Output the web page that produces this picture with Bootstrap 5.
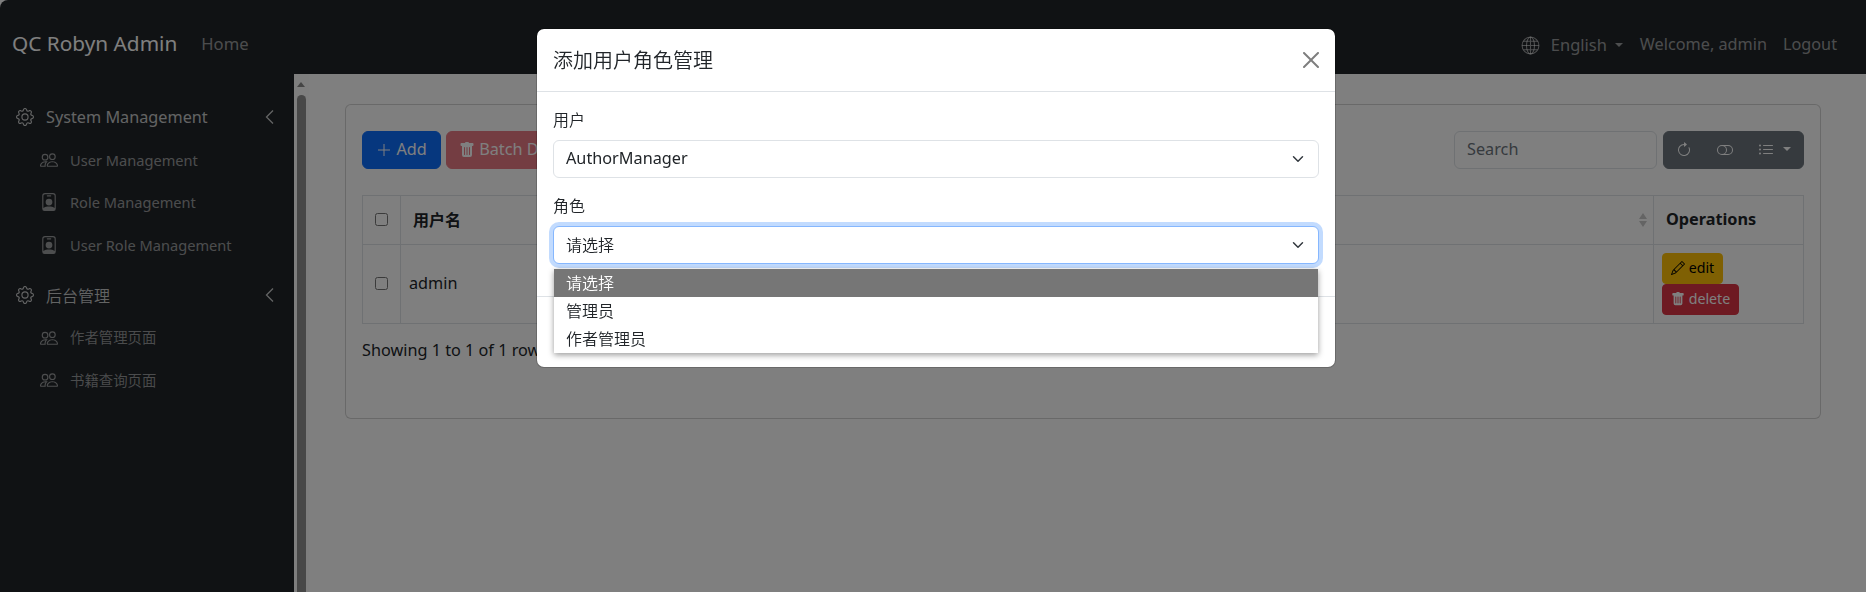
<!DOCTYPE html>
<html lang="en">
<head>
<meta charset="utf-8">
<title>QC Robyn Admin</title>
<link href="https://cdn.jsdelivr.net/npm/bootstrap@5.3.0/dist/css/bootstrap.min.css" rel="stylesheet">
<style>
body{font-family:"Noto Sans","Noto Sans CJK SC",sans-serif;background:#fff;height:592px;overflow:hidden}
.en{font-size:1.015em;line-height:1;vertical-align:.04em}
[lang=zh]{font-family:"Noto Sans CJK SC",sans-serif;font-weight:350}
svg.ic{width:1em;height:1em;fill:currentColor;flex:none;vertical-align:-.125em}
svg.ln{fill:none;stroke:currentColor}
.shell{height:592px;border-top-left-radius:8px;overflow:hidden}
.topbar{height:74px;background:#212529;padding:16px 29px 0 12px;color:rgba(255,255,255,.55)}
.brand-text{font-size:20px;color:#fff}
.brand-text .en,.home-link .en{font-size:1.04em}
.home-link{margin-left:24px}
.globe{font-size:19px}
.lang-pick{margin-left:11px;margin-right:17px;padding-top:1px}
.lang-pick .en{font-size:1.03em}
.lang-pick::after{margin-left:.5em}
.logout{margin-left:16px}
.side{width:294px;background:#212529;color:rgba(255,255,255,.55);padding-top:15px;flex:none}
.side-head{height:50px;padding:6px 16px 0 16px;color:rgba(255,255,255,.75)}
.side-head svg{font-size:18px}
.side-head svg.chev{font-size:16px;stroke-width:1.3}
.head-text{margin-left:12px}
.side-item{height:42.67px;padding-left:40px;padding-bottom:1px;font-size:14.4px}
.side-item svg{font-size:18px;margin-right:12px}
.side-item [lang=zh]{margin-top:-1px}
.rail{width:15px;flex:none;padding:8px 3px 0;background:#fcfcfc}
.rail-up{width:0;border:4.5px solid transparent;border-top:0;border-bottom:5px solid #8b8b8b}
.rail-thumb{width:9px;background:#909090;border-radius:5px 5px 0 0;margin-top:8px}
.panel{margin:30px 45px 0 36px;height:315px;padding:25.5px 16px 0}
.tools{gap:5px}
.right-tools{gap:6px}
.add-btn{width:79px}
.searchbox{width:203px}
.btn-group .dropdown-toggle::after{margin-left:.3em}
.tbl{margin:26px 0 0}
.tbl th,.tbl td{vertical-align:middle}
.tbl th{padding:12px;height:49px}
.tbl th [lang=zh]{margin-top:-2px}
.tbl th .sorter{margin-right:-6px}
.tbl .pick{width:38px;padding:0 0 1px;text-align:center}
.tbl .ops{width:150px}
.tbl input{width:13px;height:13px;display:block;margin:auto}
.info{margin-top:15px}
.modal-pad{padding-left:6px}
.modal-body .form-label{margin-top:-1px;margin-bottom:9px}
.modal-body .form-select{height:38px}
.modal-body .form-select[lang=zh]{padding-top:5px}
.picker{position:absolute;left:1px;right:1px;top:43px;background:#fff;box-shadow:0 2px 6px rgba(0,0,0,.4);z-index:3}
.picker div{height:28px;line-height:26px;padding-left:12px}
.picker .on{background:#767676;color:#fff}
.focused{border-color:#86b7fe;box-shadow:0 0 0 .25rem rgba(13,110,253,.25)}
.foot-space{height:71px}
</style>
</head>
<body>
<svg class="d-none">
<symbol id="gear" viewBox="0 0 16 16"><path d="M8 4.754a3.246 3.246 0 1 0 0 6.492 3.246 3.246 0 0 0 0-6.492zM5.754 8a2.246 2.246 0 1 1 4.492 0 2.246 2.246 0 0 1-4.492 0z"/><path d="M9.796 1.343c-.527-1.79-3.065-1.79-3.592 0l-.094.319a.873.873 0 0 1-1.255.52l-.292-.16c-1.64-.892-3.433.902-2.54 2.541l.159.292a.873.873 0 0 1-.52 1.255l-.319.094c-1.79.527-1.79 3.065 0 3.592l.319.094a.873.873 0 0 1 .52 1.255l-.16.292c-.892 1.64.901 3.434 2.541 2.54l.292-.159a.873.873 0 0 1 1.255.52l.094.319c.527 1.79 3.065 1.79 3.592 0l.094-.319a.873.873 0 0 1 1.255-.52l.292.16c1.64.893 3.434-.902 2.54-2.541l-.159-.292a.873.873 0 0 1 .52-1.255l.319-.094c1.79-.527 1.79-3.065 0-3.592l-.319-.094a.873.873 0 0 1-.52-1.255l.16-.292c.893-1.64-.902-3.433-2.541-2.54l-.292.159a.873.873 0 0 1-1.255-.52l-.094-.319zm-2.633.283c.246-.835 1.428-.835 1.674 0l.094.319a1.873 1.873 0 0 0 2.693 1.115l.291-.16c.764-.415 1.6.42 1.184 1.185l-.159.292a1.873 1.873 0 0 0 1.116 2.692l.318.094c.835.246.835 1.428 0 1.674l-.319.094a1.873 1.873 0 0 0-1.115 2.693l.16.291c.415.764-.42 1.6-1.185 1.184l-.291-.159a1.873 1.873 0 0 0-2.693 1.116l-.094.318c-.246.835-1.428.835-1.674 0l-.094-.319a1.873 1.873 0 0 0-2.692-1.115l-.292.16c-.764.415-1.6-.42-1.184-1.185l.159-.291A1.873 1.873 0 0 0 1.945 8.93l-.319-.094c-.835-.246-.835-1.428 0-1.674l.319-.094A1.873 1.873 0 0 0 3.06 4.377l-.16-.292c-.415-.764.42-1.6 1.185-1.184l.292.159a1.873 1.873 0 0 0 2.692-1.115l.094-.319z"/></symbol>
<symbol id="people" viewBox="0 0 16 16"><path d="M15 14s1 0 1-1-1-4-5-4-5 3-5 4 1 1 1 1h8Zm-7.978-1A.261.261 0 0 1 7 12.996c.001-.264.167-1.03.76-1.72C8.312 10.629 9.282 10 11 10c1.717 0 2.687.63 3.24 1.276.593.69.758 1.457.76 1.72l-.008.002a.274.274 0 0 1-.014.002H7.022ZM11 7a2 2 0 1 0 0-4 2 2 0 0 0 0 4Zm3-2a3 3 0 1 1-6 0 3 3 0 0 1 6 0ZM6.936 9.28a5.88 5.88 0 0 0-1.23-.247A7.35 7.35 0 0 0 5 9c-4 0-5 3-5 4 0 .667.333 1 1 1h4.216A2.238 2.238 0 0 1 5 13c0-1.01.377-2.042 1.09-2.904.243-.294.526-.569.846-.816ZM4.92 10A5.493 5.493 0 0 0 4 13H1c0-.26.164-1.03.76-1.724.545-.636 1.492-1.256 3.16-1.275ZM1.5 5.5a3 3 0 1 1 6 0 3 3 0 0 1-6 0Zm3-2a2 2 0 1 0 0 4 2 2 0 0 0 0-4Z"/></symbol>
<symbol id="badge-i" viewBox="0 0 16 16"><path d="M6.5 2a.5.5 0 0 0 0 1h3a.5.5 0 0 0 0-1h-3zM11 8a3 3 0 1 1-6 0 3 3 0 0 1 6 0z"/><path d="M4.5 0A2.5 2.5 0 0 0 2 2.5V14a2 2 0 0 0 2 2h8a2 2 0 0 0 2-2V2.5A2.5 2.5 0 0 0 11.5 0h-7zM3 2.5A1.5 1.5 0 0 1 4.5 1h7A1.5 1.5 0 0 1 13 2.5v10.795a4.2 4.2 0 0 0-.776-.492C11.392 12.387 10.063 12 8 12s-3.392.387-4.224.803a4.2 4.2 0 0 0-.776.492V2.5z"/></symbol>
<symbol id="trash" viewBox="0 0 16 16"><path d="M2.5 1a1 1 0 0 0-1 1v1a1 1 0 0 0 1 1H3v9a2 2 0 0 0 2 2h6a2 2 0 0 0 2-2V4h.5a1 1 0 0 0 1-1V2a1 1 0 0 0-1-1H10a1 1 0 0 0-1-1H7a1 1 0 0 0-1 1H2.5zm3 4a.5.5 0 0 1 .5.5v7a.5.5 0 0 1-1 0v-7a.5.5 0 0 1 .5-.5zM8 5a.5.5 0 0 1 .5.5v7a.5.5 0 0 1-1 0v-7A.5.5 0 0 1 8 5zm3 .5v7a.5.5 0 0 1-1 0v-7a.5.5 0 0 1 1 0z"/></symbol>
<symbol id="pencil" viewBox="0 0 16 16"><path d="M12.146.146a.5.5 0 0 1 .708 0l3 3a.5.5 0 0 1 0 .708l-10 10a.5.5 0 0 1-.168.11l-5 2a.5.5 0 0 1-.65-.65l2-5a.5.5 0 0 1 .11-.168l10-10zM11.207 2.5 13.5 4.793 14.793 3.5 12.5 1.207 11.207 2.5zm1.586 3L10.5 3.207 4 9.707V10h.5a.5.5 0 0 1 .5.5v.5h.5a.5.5 0 0 1 .5.5v.5h.293l6.5-6.5zm-9.761 5.175-.106.106-1.528 3.821 3.821-1.528.106-.106A.5.5 0 0 1 5 12.5V12h-.5a.5.5 0 0 1-.5-.5V11h-.5a.5.5 0 0 1-.468-.325z"/></symbol>
</svg>

<div class="shell d-flex flex-column">
  <header class="topbar d-flex align-items-center">
    <span class="brand-text"><span class="en">QC Robyn Admin</span></span>
    <span class="home-link"><span class="en">Home</span></span>
    <div class="ms-auto d-flex align-items-center">
      <svg class="ic ln globe" viewBox="0 0 18 18"><circle cx="9" cy="9" r="8"/><ellipse cx="9" cy="9" rx="3.8" ry="8"/><path d="M9 1v16M1 9h16M2.3 5h13.4M2.3 13h13.4"/></svg>
      <span class="dropdown-toggle lang-pick"><span class="en">English</span></span>
      <span class="welcome"><span class="en">Welcome, admin</span></span>
      <span class="logout"><span class="en">Logout</span></span>
    </div>
  </header>
  <div class="d-flex flex-grow-1">
    <nav class="side">
      <div class="side-head d-flex align-items-center"><svg class="ic"><use href="#gear"/></svg><span class="en head-text">System Management</span><svg class="ic ln ms-auto chev" viewBox="0 0 16 16"><path d="M11 1.5 4.5 8l6.5 6.5"/></svg></div>
      <div class="side-item d-flex align-items-center"><svg class="ic"><use href="#people"/></svg><span class="en">User Management</span></div>
      <div class="side-item d-flex align-items-center"><svg class="ic"><use href="#badge-i"/></svg><span class="en">Role Management</span></div>
      <div class="side-item d-flex align-items-center"><svg class="ic"><use href="#badge-i"/></svg><span class="en">User Role Management</span></div>
      <div class="side-head d-flex align-items-center"><svg class="ic"><use href="#gear"/></svg><span lang="zh" class="head-text">后台管理</span><svg class="ic ln ms-auto chev" viewBox="0 0 16 16"><path d="M11 1.5 4.5 8l6.5 6.5"/></svg></div>
      <div class="side-item d-flex align-items-center"><svg class="ic"><use href="#people"/></svg><span lang="zh">作者管理页面</span></div>
      <div class="side-item d-flex align-items-center"><svg class="ic"><use href="#people"/></svg><span lang="zh">书籍查询页面</span></div>
    </nav>
    <div class="rail d-flex flex-column"><div class="rail-up"></div><div class="rail-thumb flex-grow-1"></div></div>
    <main class="flex-grow-1">
      <div class="card panel">
        <div class="d-flex justify-content-between">
          <div class="d-flex tools">
            <button class="btn btn-primary add-btn text-nowrap"><svg class="ic ln" viewBox="0 0 16 16"><path d="M8 2v12M2 8h12"/></svg> <span class="en">Add</span></button>
            <button class="btn btn-danger disabled text-nowrap del-btn"><svg class="ic"><use href="#trash"/></svg> <span class="en">Batch Delete</span></button>
          </div>
          <div class="d-flex right-tools">
            <div class="form-control searchbox text-secondary"><span class="en">Search</span></div>
            <div class="btn-group">
              <button class="btn btn-secondary"><svg class="ic" viewBox="0 0 16 16"><path d="M8 3a5 5 0 1 0 4.546 2.914.5.5 0 0 1 .908-.417A6 6 0 1 1 8 2v1z"/><path d="M8 4.466V.534a.25.25 0 0 1 .41-.192l2.36 1.966c.12.1.12.284 0 .384L8.41 4.658A.25.25 0 0 1 8 4.466z"/></svg></button>
              <button class="btn btn-secondary"><svg class="ic" viewBox="0 0 16 16"><path d="M11 4a4 4 0 0 1 0 8H8a4.992 4.992 0 0 0 2-4 4.992 4.992 0 0 0-2-4h3zm-6 8a4 4 0 1 1 0-8 4 4 0 0 1 0 8zM0 8a5 5 0 0 0 5 5h6a5 5 0 0 0 0-10H5a5 5 0 0 0-5 5z"/></svg></button>
              <button class="btn btn-secondary dropdown-toggle text-nowrap"><svg class="ic" viewBox="0 0 16 16"><path d="M5 11.5a.5.5 0 0 1 .5-.5h9a.5.5 0 0 1 0 1h-9a.5.5 0 0 1-.5-.5zm0-4a.5.5 0 0 1 .5-.5h9a.5.5 0 0 1 0 1h-9a.5.5 0 0 1-.5-.5zm0-4a.5.5 0 0 1 .5-.5h9a.5.5 0 0 1 0 1h-9a.5.5 0 0 1-.5-.5zm-3 1a1 1 0 1 0 0-2 1 1 0 0 0 0 2zm0 4a1 1 0 1 0 0-2 1 1 0 0 0 0 2zm0 4a1 1 0 1 0 0-2 1 1 0 0 0 0 2z"/></svg> </button>
            </div>
          </div>
        </div>
        <table class="table table-bordered tbl">
          <tr><th class="pick"><input type="checkbox"></th><th><div class="d-flex align-items-center justify-content-between"><span lang="zh" class="fw-bold">用户名</span><svg class="sorter" width="8" height="14" viewBox="0 0 8 14"><path d="M4 0 8 6H0zM4 14 0 8h8z" fill="#c8c8c8"/></svg></div></th><th class="ops"><span class="en">Operations</span></th></tr>
          <tr><td class="pick"><input type="checkbox"></td><td><span class="en">admin</span></td><td>
            <div class="d-flex flex-column align-items-start">
              <button class="btn btn-warning btn-sm"><svg class="ic"><use href="#pencil"/></svg> <span class="en">edit</span></button>
              <button class="btn btn-danger btn-sm"><svg class="ic"><use href="#trash"/></svg> <span class="en">delete</span></button>
            </div></td></tr>
        </table>
        <div class="info"><span class="en">Showing 1 to 1 of 1 rows</span></div>
      </div>
    </main>
  </div>
</div>

<div class="modal-backdrop show"></div>
<div class="modal show d-block modal-pad" tabindex="-1">
  <div class="modal-dialog modal-lg">
    <div class="modal-content">
      <div class="modal-header"><h5 class="modal-title" lang="zh">添加用户角色管理</h5><button type="button" class="btn-close" aria-label="Close"></button></div>
      <div class="modal-body">
        <label class="form-label d-block" lang="zh">用户</label>
        <div class="form-select mb-3"><span class="en">AuthorManager</span></div>
        <label class="form-label d-block" lang="zh">角色</label>
        <div class="position-relative mb-3">
          <div class="form-select focused" lang="zh">请选择</div>
          <div class="picker" lang="zh"><div class="on">请选择</div><div>管理员</div><div>作者管理员</div></div>
        </div>
      </div>
      <div class="modal-footer foot-space"></div>
    </div>
  </div>
</div>
<script src="https://cdn.jsdelivr.net/npm/bootstrap@5.3.0/dist/js/bootstrap.bundle.min.js"></script>
</body>
</html>
